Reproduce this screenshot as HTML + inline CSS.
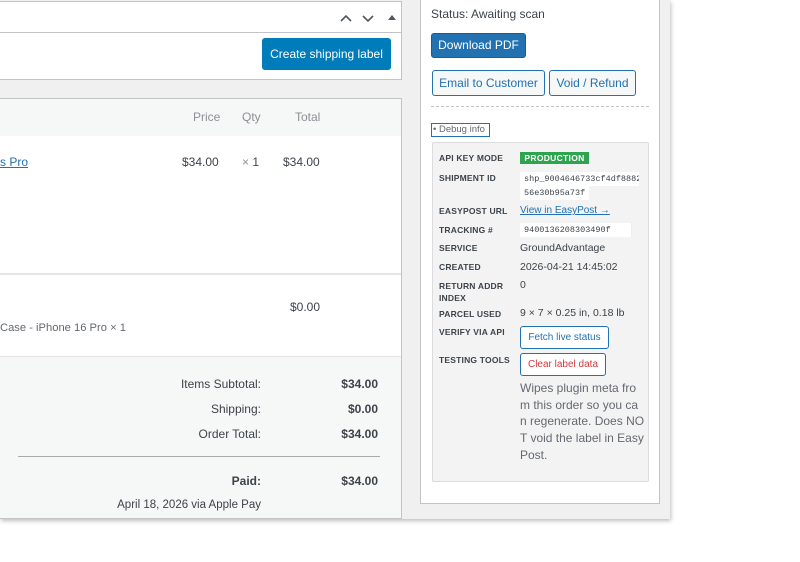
<!DOCTYPE html>
<html><head><style>
*{box-sizing:border-box;margin:0;padding:0}
body{width:800px;height:562px;background:#fff;font-family:"Liberation Sans",sans-serif;position:relative;overflow:hidden;color:#3c434a}
.abs{position:absolute}
.bg{left:0;top:0;width:670px;height:519px;background:#f0f0f1;box-shadow:1px 2px 4px rgba(0,0,0,.25)}
.box{background:#fff;border:1px solid #c3c4c7}
.t{position:absolute;font-size:12px;white-space:nowrap}
.lbl{position:absolute;left:439px;font-size:8.5px;font-weight:bold;color:#3c434a;letter-spacing:.2px}
.val{position:absolute;left:520px;font-size:11px;color:#3c434a;white-space:nowrap}
.code{position:absolute;left:520px;background:#fff;font-family:"Liberation Mono",monospace;font-size:8.5px;padding:2px 4px;height:14px;line-height:10px;white-space:nowrap}
.btn2{position:absolute;border:1px solid #2271b1;border-radius:3px;background:#f6f7f7;color:#2271b1;font-size:12px;text-align:center}
</style></head><body>
<div class="abs bg"></div>
<div class="abs box" style="left:-2px;top:1px;width:404px;height:79px"></div>
<div class="abs" style="left:0;top:32px;width:401px;height:1px;background:#c3c4c7"></div>
<svg class="abs" style="left:338px;top:11px" width="60" height="14"><path d="M3 10 L8 5 L13 10" stroke="#50575e" stroke-width="1.6" fill="none"/><path d="M25 5 L30 10 L35 5" stroke="#50575e" stroke-width="1.6" fill="none"/><path d="M50 9 L54 4 L58 9Z" fill="#50575e"/></svg>
<div class="abs" style="left:262px;top:38px;width:129px;height:32px;background:#007cba;border-radius:3px;color:#fff;font-size:12px;line-height:32px;text-align:center">Create shipping label</div>
<div class="abs box" style="left:-2px;top:98px;width:404px;height:421px"></div>
<div class="abs" style="left:0;top:99px;width:401px;height:37px;background:#f6f7f7"></div>
<div class="t" style="left:193px;top:110px;color:#8c8f94">Price</div>
<div class="t" style="left:242px;top:110px;color:#8c8f94">Qty</div>
<div class="t" style="left:295px;top:110px;color:#8c8f94">Total</div>
<div class="t" style="left:0;top:155px;color:#2271b1;text-decoration:underline">s Pro</div>
<div class="t" style="left:182px;top:155px">$34.00</div>
<div class="t" style="left:242px;top:155px"><span style="color:#8c8f94">×</span> 1</div>
<div class="t" style="left:283px;top:155px">$34.00</div>
<div class="abs" style="left:0;top:273px;width:401px;height:2px;background:#e5e5e5"></div>
<div class="t" style="left:290px;top:300px">$0.00</div>
<div class="t" style="left:0;top:322px;color:#646970;font-size:11.2px">Case - iPhone 16 Pro × 1</div>
<div class="abs" style="left:0;top:356px;width:401px;height:162px;background:#f6f7f7;border-top:1px solid #e5e5e5"></div>
<div class="t" style="left:0;width:261px;text-align:right;top:377px">Items Subtotal:</div>
<div class="t" style="left:300px;width:78px;text-align:right;top:377px;font-weight:bold">$34.00</div>
<div class="t" style="left:0;width:261px;text-align:right;top:402px">Shipping:</div>
<div class="t" style="left:300px;width:78px;text-align:right;top:402px;font-weight:bold">$0.00</div>
<div class="t" style="left:0;width:261px;text-align:right;top:427px">Order Total:</div>
<div class="t" style="left:300px;width:78px;text-align:right;top:427px;font-weight:bold">$34.00</div>
<div class="abs" style="left:18px;top:456px;width:362px;height:1px;background:#a7aaad"></div>
<div class="t" style="left:0;width:261px;text-align:right;top:474px;font-weight:bold">Paid:</div>
<div class="t" style="left:300px;width:78px;text-align:right;top:474px;font-weight:bold">$34.00</div>
<div class="t" style="left:0;width:261px;text-align:right;top:499px;font-size:11.5px">April 18, 2026 via Apple Pay</div>
<div class="abs box" style="left:420px;top:-2px;width:240px;height:506px"></div>
<div class="t" style="left:431px;top:7px;font-size:12px">Status: Awaiting scan</div>
<div class="abs" style="left:431px;top:33px;width:95px;height:25px;background:#2271b1;border:1px solid #135e96;border-radius:3px;color:#fff;font-size:12px;line-height:23px;text-align:center">Download PDF</div>
<div class="btn2" style="left:432px;top:70px;width:113px;height:26px;line-height:24px">Email to Customer</div>
<div class="btn2" style="left:549px;top:70px;width:87px;height:26px;line-height:24px">Void / Refund</div>
<div class="abs" style="left:431px;top:106px;width:218px;border-top:1px dashed #c3c4c7"></div>
<div class="abs" style="left:431px;top:123px;width:59px;height:14px;border:1px solid #2271b1;font-size:9.5px;color:#646970;line-height:12px;padding-left:1px;white-space:nowrap">• Debug info</div>
<div class="abs" style="left:432px;top:142px;width:217px;height:340px;background:#f3f3f3;border:1px solid #dcdcde;border-radius:2px"></div>
<div class="lbl" style="top:153px">API KEY MODE</div>
<div class="abs" style="left:520px;top:152px;width:69px;height:12px;background:#2ea44f;color:#fff;font-size:8.5px;font-weight:bold;line-height:12px;text-align:center;letter-spacing:.3px">PRODUCTION</div>
<div class="lbl" style="top:173px">SHIPMENT ID</div>
<div class="code" style="top:172px;width:119px;overflow:hidden">shp_9004646733cf4df8882f</div>
<div class="code" style="top:186px">56e30b95a73f</div>
<div class="lbl" style="top:206px">EASYPOST URL</div>
<div class="val" style="top:205px;color:#2271b1;text-decoration:underline;font-size:10px">View in EasyPost →</div>
<div class="lbl" style="top:225px">TRACKING #</div>
<div class="code" style="top:223px;width:112px;overflow:hidden;border-right:1px solid #eee">9400136208303490f</div>
<div class="lbl" style="top:243px">SERVICE</div>
<div class="val" style="top:242px;font-size:10.5px">GroundAdvantage</div>
<div class="lbl" style="top:262px">CREATED</div>
<div class="val" style="top:261px;font-size:10.5px">2026-04-21 14:45:02</div>
<div class="lbl" style="top:280px;line-height:12px">RETURN ADDR<br>INDEX</div>
<div class="val" style="top:279px;font-size:10.5px">0</div>
<div class="lbl" style="top:309px">PARCEL USED</div>
<div class="val" style="top:307px;font-size:10.5px">9 × 7 × 0.25 in, 0.18 lb</div>
<div class="lbl" style="top:327px">VERIFY VIA API</div>
<div class="btn2" style="left:520px;top:326px;width:89px;height:23px;line-height:21px;font-size:10px;background:#fff">Fetch live status</div>
<div class="lbl" style="top:355px">TESTING TOOLS</div>
<div class="btn2" style="left:520px;top:353px;width:86px;height:23px;line-height:21px;font-size:10px;background:#fff;color:#d63638">Clear label data</div>
<div class="abs" style="left:520px;top:380px;width:125px;font-size:12px;line-height:16.7px;color:#646970">Wipes plugin meta fro<br>m this order so you ca<br>n regenerate. Does NO<br>T void the label in Easy<br>Post.</div>
</body></html>
